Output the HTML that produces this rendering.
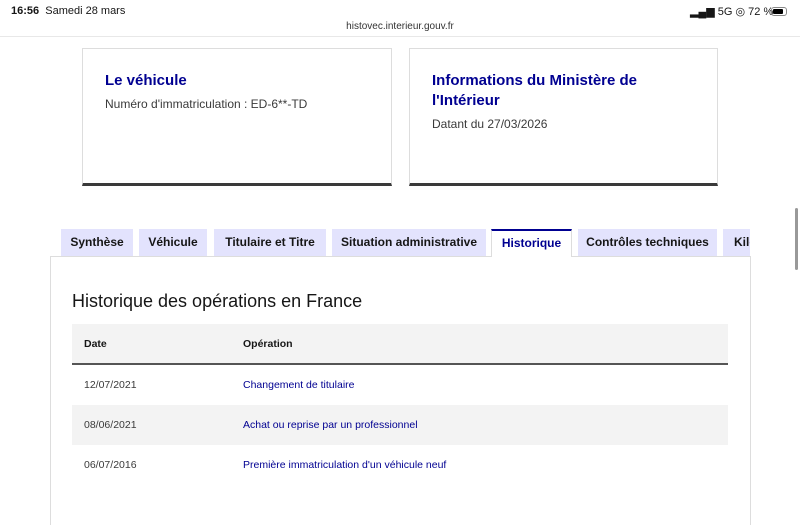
<!DOCTYPE html>
<html><head><meta charset="utf-8"><style>
*{margin:0;padding:0;box-sizing:border-box}
html,body{width:800px;height:525px;overflow:hidden}
body{background:#fff;font-family:"Liberation Sans",sans-serif;position:relative;color:#161616}
.abs{position:absolute}
.card{position:absolute;top:48px;height:138px;border:1px solid #ddd;border-bottom:3px solid #3a3a3a;background:#fff}
.card h2{position:absolute;left:22px;font-size:15px;color:#000091;font-weight:bold;line-height:20px}
.card p{position:absolute;left:22px;font-size:12px;color:#3a3a3a}
.tab{position:absolute;top:229px;height:27px;background:#e3e3fd;font-size:12px;font-weight:bold;color:#161616;text-align:center;line-height:27px;white-space:nowrap;overflow:hidden}
.row{position:absolute;left:72px;width:656px;height:40px;font-size:10.5px;line-height:40px}
.row span{position:absolute}
.d{left:12px;color:#3a3a3a}
.o{left:171px;color:#000091}
</style></head><body>
<div class="abs" style="left:11px;top:5px;font-size:11px;font-weight:bold;white-space:nowrap">16:56 <span style="font-weight:normal">&nbsp;Samedi 28 mars</span></div>
<div class="abs" style="left:690px;top:5px;width:80px;font-size:11px;white-space:nowrap">▂▄▆ 5G ◎ 72&nbsp;%</div>
<div class="abs" style="left:771px;top:7px;width:16px;height:9px;border:1px solid #888;border-radius:3px"><div style="margin:1px;width:10px;height:5px;background:#000;border-radius:1px"></div></div>
<div class="abs" style="left:0;top:21px;width:800px;text-align:center;font-size:10px;color:#333">histovec.interieur.gouv.fr</div>
<div class="abs" style="left:0;top:36px;width:800px;height:1px;background:#e8e8e8"></div>

<div class="card" style="left:82px;width:310px"><h2 style="top:22px">Le véhicule</h2><p style="top:48px">Numéro d'immatriculation : ED-6**-TD</p></div>
<div class="card" style="left:409px;width:309px"><h2 style="top:22px">Informations du Ministère de<br>l'Intérieur</h2><p style="top:68px">Datant du 27/03/2026</p></div>

<div class="abs" style="left:50px;top:256px;width:701px;height:275px;border:1px solid #ddd"></div>
<div class="tab" style="left:61px;width:72px">Synthèse</div>
<div class="tab" style="left:139px;width:68px">Véhicule</div>
<div class="tab" style="left:214px;width:112px">Titulaire et Titre</div>
<div class="tab" style="left:332px;width:154px">Situation administrative</div>
<div class="tab" style="left:491px;width:81px;background:#fff;color:#000091;border-top:2px solid #000091;border-left:1px solid #ddd;border-right:1px solid #ddd;height:28px;line-height:25px">Historique</div>
<div class="tab" style="left:578px;width:139px">Contrôles techniques</div>
<div class="tab" style="left:723px;width:27px;text-align:left;padding-left:11px">Kilo</div>

<div class="abs" style="left:72px;top:291px;font-size:18px;color:#161616">Historique des opérations en France</div>
<div class="row" style="top:324px;height:41px;background:#f3f3f3;font-weight:bold;border-bottom:2px solid #555;line-height:40px"><span class="d" style="color:#161616">Date</span><span class="o" style="color:#161616">Opération</span></div>
<div class="row" style="top:365px"><span class="d">12/07/2021</span><span class="o">Changement de titulaire</span></div>
<div class="row" style="top:405px;background:#f3f3f3"><span class="d">08/06/2021</span><span class="o">Achat ou reprise par un professionnel</span></div>
<div class="row" style="top:445px"><span class="d">06/07/2016</span><span class="o">Première immatriculation d'un véhicule neuf</span></div>
<div class="abs" style="left:795px;top:208px;width:3px;height:62px;background:#999;border-radius:2px"></div>
</body></html>
